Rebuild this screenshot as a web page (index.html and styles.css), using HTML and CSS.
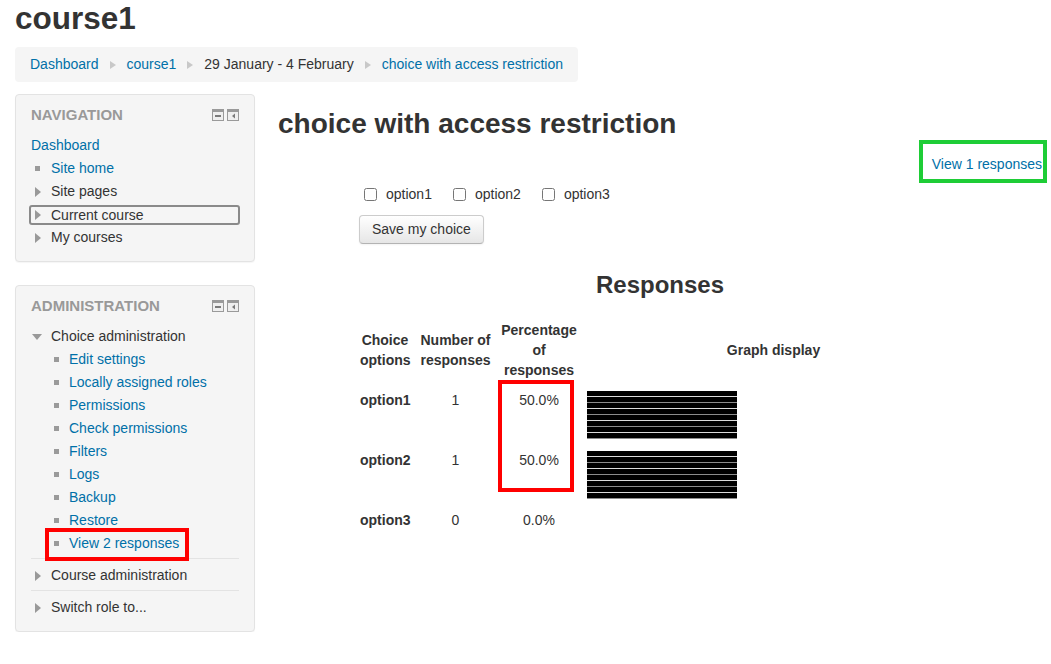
FILE: index.html
```html
<!DOCTYPE html>
<html lang="en">
<head>
<meta charset="utf-8">
<title>choice with access restriction</title>
<link rel="stylesheet" href="styles.css">
</head>
<body>
<div class="page">
  <header class="page-header">
    <h1 class="course-title">course1</h1>
    <nav class="breadcrumb">
      <a href="#">Dashboard</a><span class="sep"></span>
      <a href="#">course1</a><span class="sep"></span>
      <span>29 January - 4 February</span><span class="sep"></span>
      <a href="#">choice with access restriction</a>
    </nav>
  </header>

  <div class="layout">
    <aside class="sidebar">
      <section class="block">
        <div class="block-head">
          <h2>Navigation</h2>
          <div class="block-icons">
            <svg width="12" height="12" viewBox="0 0 12 12"><rect x="0.5" y="0.5" width="11" height="11" fill="#efefef" stroke="#9a9a9a"/><rect x="1" y="1" width="10" height="2" fill="#9a9a9a"/><rect x="3" y="6" width="6" height="2" fill="#7a7a7a"/></svg>
            <svg width="12" height="12" viewBox="0 0 12 12"><rect x="0.5" y="0.5" width="11" height="11" fill="#efefef" stroke="#9a9a9a"/><rect x="1" y="1" width="10" height="2" fill="#9a9a9a"/><path d="M8 4.5 L5 7 L8 9.5 Z" fill="#7a7a7a"/></svg>
          </div>
        </div>
        <ul class="tree">
          <li class="item"><a href="#">Dashboard</a></li>
          <li class="item"><span class="ico"><span class="bullet"></span></span><a href="#">Site home</a></li>
          <li class="item"><span class="ico"><span class="tri-right"></span></span><span>Site pages</span></li>
          <li class="current"><div class="focus"><span class="ico"><span class="tri-right"></span></span><span>Current course</span></div></li>
          <li class="item"><span class="ico"><span class="tri-right"></span></span><span>My courses</span></li>
        </ul>
      </section>

      <section class="block">
        <div class="block-head">
          <h2>Administration</h2>
          <div class="block-icons">
            <svg width="12" height="12" viewBox="0 0 12 12"><rect x="0.5" y="0.5" width="11" height="11" fill="#efefef" stroke="#9a9a9a"/><rect x="1" y="1" width="10" height="2" fill="#9a9a9a"/><rect x="3" y="6" width="6" height="2" fill="#7a7a7a"/></svg>
            <svg width="12" height="12" viewBox="0 0 12 12"><rect x="0.5" y="0.5" width="11" height="11" fill="#efefef" stroke="#9a9a9a"/><rect x="1" y="1" width="10" height="2" fill="#9a9a9a"/><path d="M8 4.5 L5 7 L8 9.5 Z" fill="#7a7a7a"/></svg>
          </div>
        </div>
        <ul class="tree">
          <li>
            <div class="item"><span class="ico"><span class="tri-down"></span></span><span>Choice administration</span></div>
            <ul class="sub">
              <li class="item"><span class="ico"><span class="bullet"></span></span><a href="#">Edit settings</a></li>
              <li class="item"><span class="ico"><span class="bullet"></span></span><a href="#">Locally assigned roles</a></li>
              <li class="item"><span class="ico"><span class="bullet"></span></span><a href="#">Permissions</a></li>
              <li class="item"><span class="ico"><span class="bullet"></span></span><a href="#">Check permissions</a></li>
              <li class="item"><span class="ico"><span class="bullet"></span></span><a href="#">Filters</a></li>
              <li class="item"><span class="ico"><span class="bullet"></span></span><a href="#">Logs</a></li>
              <li class="item"><span class="ico"><span class="bullet"></span></span><a href="#">Backup</a></li>
              <li class="item"><span class="ico"><span class="bullet"></span></span><a href="#">Restore</a></li>
              <li class="item marked-red"><span class="ico"><span class="bullet"></span></span><a href="#">View 2 responses</a></li>
            </ul>
          </li>
          <li class="item divided"><span class="ico"><span class="tri-right"></span></span><span>Course administration</span></li>
          <li class="item divided"><span class="ico"><span class="tri-right"></span></span><span>Switch role to...</span></li>
        </ul>
      </section>
    </aside>

    <main class="main">
      <h2 class="activity-title">choice with access restriction</h2>
      <div class="reportlink"><a href="#" class="marked-green">View 1 responses</a></div>

      <div class="choice-area">
        <ul class="choices">
          <li><input type="checkbox" id="o1"><label for="o1">option1</label></li>
          <li><input type="checkbox" id="o2"><label for="o2">option2</label></li>
          <li><input type="checkbox" id="o3"><label for="o3">option3</label></li>
        </ul>
        <button class="btn" type="button">Save my choice</button>

        <h2 class="results-title">Responses</h2>
        <div class="results">
          <table class="results-table">
            <colgroup>
              <col class="c1"><col class="c2"><col class="c3"><col class="c4">
            </colgroup>
            <thead>
              <tr>
                <th>Choice options</th>
                <th>Number of responses</th>
                <th>Percentage of responses</th>
                <th>Graph display</th>
              </tr>
            </thead>
            <tbody>
              <tr>
                <td class="opt">option1</td>
                <td>1</td>
                <td>50.0%</td>
                <td class="graph"><div class="bar" style="width:150px"></div></td>
              </tr>
              <tr>
                <td class="opt">option2</td>
                <td>1</td>
                <td>50.0%</td>
                <td class="graph"><div class="bar" style="width:150px"></div></td>
              </tr>
              <tr>
                <td class="opt">option3</td>
                <td>0</td>
                <td>0.0%</td>
                <td class="graph"></td>
              </tr>
            </tbody>
          </table>
          <span class="mark-red"></span>
        </div>
      </div>
    </main>
  </div>
</div>
</body>
</html>
```

FILE: styles.css
```css
* { box-sizing: content-box; }

body {
  margin: 0;
  font-family: "Liberation Sans", Arial, sans-serif;
  font-size: 14px;
  line-height: 20px;
  color: #333;
  background: #fff;
}

a { color: #0070a8; text-decoration: none; }

.page { padding: 0 9px 0 15px; }

.course-title {
  margin: 0;
  font-size: 31.5px;
  line-height: 36px;
  font-weight: bold;
  color: #333;
}

.breadcrumb {
  width: fit-content;
  margin-top: 11px;
  padding: 8px 15px;
  height: 19px;
  line-height: 19px;
  background: #f5f5f5;
  border-radius: 4px;
  display: flex;
  align-items: center;
}

.sep {
  width: 0;
  height: 0;
  border-left: 6px solid #c8c8c8;
  border-top: 4px solid transparent;
  border-bottom: 4px solid transparent;
  margin: 1px 11px 0 11px;
}

.layout {
  display: flex;
  align-items: flex-start;
  margin-top: 12px;
}

.sidebar {
  width: 240px;
  flex: none;
  display: flex;
  flex-direction: column;
  gap: 23px;
}

.block {
  background: #f5f5f5;
  border: 1px solid #e3e3e3;
  border-radius: 4px;
  padding: 10px 15px 12px;
  box-shadow: 0 1px 1px rgba(0, 0, 0, 0.04);
}

.block-head {
  display: flex;
  justify-content: space-between;
  align-items: center;
  margin-bottom: 9px;
}

.block-head h2 {
  margin: 0;
  font-size: 15px;
  line-height: 20px;
  font-weight: bold;
  color: #999;
  text-transform: uppercase;
}

.block-icons { display: flex; gap: 3px; }
.block-icons svg { display: block; }

.tree { list-style: none; margin: 0; padding: 0; }
.tree li { line-height: 23px; }

.item { display: flex; align-items: center; line-height: 23px; }

.ico {
  width: 20px;
  flex: none;
  display: flex;
  align-items: center;
}

.bullet {
  width: 5px;
  height: 5px;
  background: #9a9a9a;
  margin-left: 4px;
}

.tri-right {
  width: 0;
  height: 0;
  border-left: 6px solid #999;
  border-top: 5px solid transparent;
  border-bottom: 5px solid transparent;
  margin-left: 4px;
}

.tri-down {
  width: 0;
  height: 0;
  border-top: 6px solid #999;
  border-left: 5.5px solid transparent;
  border-right: 5.5px solid transparent;
  margin-left: 1px;
}

.sub { list-style: none; margin: 0; padding: 0 0 0 18px; }
.sub .bullet { margin-left: 5px; }

.current { padding: 1.5px 0; }
.current .focus {
  display: flex;
  align-items: center;
  line-height: 16px;
  border: 2px solid #8a8a8a;
  border-radius: 3px;
  margin: 0 -1px 0 -2px;
}

.divided {
  margin-top: 3px;
  border-top: 1px solid #e3e3e3;
  padding-top: 5px;
}

.marked-red { position: relative; }
.marked-red::after {
  content: "";
  position: absolute;
  left: -4px;
  top: -4px;
  width: 136px;
  height: 25px;
  border: 4px solid #ff0000;
}

/* main column */
.main { flex: 1; margin-left: 23px; min-width: 0; }

.activity-title {
  margin: 10px 0 0;
  font-size: 28px;
  line-height: 40px;
  font-weight: bold;
  color: #333;
}

.reportlink {
  text-align: right;
  margin-top: 10px;
  line-height: 20px;
}

.marked-green { position: relative; display: inline-block; }
.marked-green::after {
  content: "";
  position: absolute;
  left: -13px;
  top: -14px;
  right: -5px;
  bottom: -9px;
  border: 4px solid #1ecd36;
}

.choice-area { width: 610px; margin: 0 auto; }

.choices {
  list-style: none;
  margin: 10px 0 0;
  padding: 0 0 0 9px;
  display: flex;
  gap: 21px;
  line-height: 20px;
}

.choices li { display: flex; align-items: center; gap: 9px; }
.choices input { margin: 0; width: 13px; height: 13px; }

.btn {
  display: block;
  margin: 11px 0 0 4px;
  padding: 4px 12px;
  font-family: inherit;
  font-size: 14px;
  line-height: 19px;
  color: #333;
  background: linear-gradient(#ffffff, #e6e6e6);
  border: 1px solid #cccccc;
  border-bottom-color: #b3b3b3;
  border-radius: 4px;
  box-shadow: inset 0 1px 0 rgba(255, 255, 255, 0.2), 0 1px 2px rgba(0, 0, 0, 0.05);
}

.results-title {
  margin: 24px 0 0;
  text-align: center;
  font-size: 24px;
  line-height: 34px;
  font-weight: bold;
  color: #333;
}

.results { position: relative; margin-top: 13px; }

.results-table {
  border-collapse: collapse;
  table-layout: fixed;
  width: 610px;
}

.c1 { width: 60px; }
.c2 { width: 81px; }
.c3 { width: 86px; }
.c4 { width: 383px; }

.results-table th,
.results-table td {
  padding: 5px;
  line-height: 20px;
}

.results-table th {
  vertical-align: middle;
  text-align: center;
  font-weight: bold;
}

.results-table td {
  vertical-align: top;
  text-align: center;
  height: 50px;
}

.results-table td.opt { text-align: left; font-weight: bold; }
.results-table td.graph { text-align: left; }

.bar {
  height: 48px;
  margin-top: 1px;
  background: repeating-linear-gradient(to bottom,
    #000 0, #000 5px, #dcdcdc 5px, #dcdcdc 6px,
    #000 6px, #000 11px, #8c8c8c 11px, #8c8c8c 12px);
}

.mark-red {
  position: absolute;
  left: 143px;
  top: 65px;
  width: 68px;
  height: 104px;
  border: 4px solid #ff0000;
}
```
